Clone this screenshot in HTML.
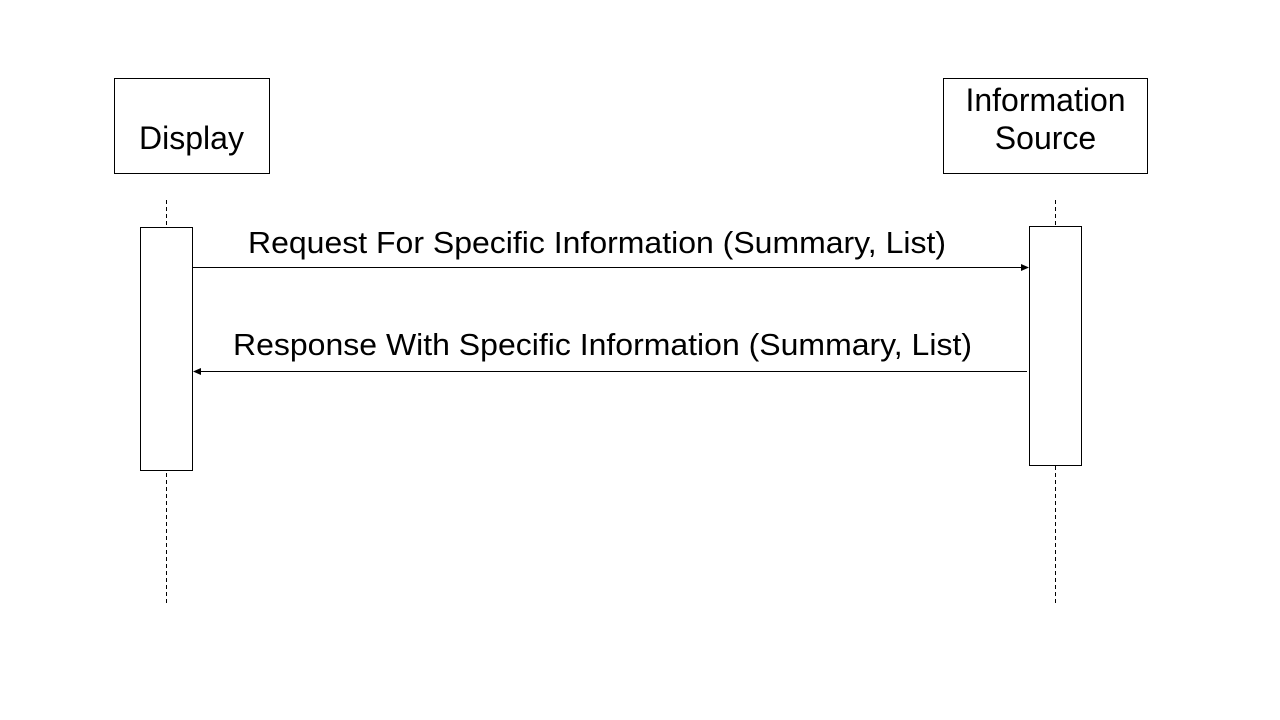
<!DOCTYPE html>
<html><head><meta charset="utf-8"><style>
html,body{margin:0;padding:0;background:#fff;}
svg{display:block;}
text{font-family:"Liberation Sans",Arial,sans-serif;fill:#000;}
</style></head><body>
<svg width="1280" height="720" viewBox="0 0 1280 720" xmlns="http://www.w3.org/2000/svg">
<rect x="114.5" y="78.5" width="155" height="95" fill="#fff" stroke="#000" stroke-width="1"/>
<text x="191.5" y="149" font-size="32" text-anchor="middle">Display</text>
<rect x="943.5" y="78.5" width="204" height="95" fill="#fff" stroke="#000" stroke-width="1"/>
<text x="1045.5" y="111" font-size="32" text-anchor="middle">Information</text>
<text x="1045.5" y="149" font-size="32" text-anchor="middle">Source</text>
<line x1="166.5" y1="200" x2="166.5" y2="604" stroke="#000" stroke-width="1" stroke-dasharray="4,3"/>
<line x1="1055.5" y1="200" x2="1055.5" y2="604" stroke="#000" stroke-width="1" stroke-dasharray="4,3"/>
<rect x="140.5" y="227.5" width="52" height="243" fill="#fff" stroke="#000" stroke-width="1"/>
<rect x="1029.5" y="226.5" width="52" height="239" fill="#fff" stroke="#000" stroke-width="1"/>
<line x1="193" y1="267.5" x2="1022" y2="267.5" stroke="#000" stroke-width="1"/>
<polygon points="1029,267.5 1021,264 1021,271" fill="#000"/>
<text x="248" y="253" font-size="31" textLength="698" lengthAdjust="spacingAndGlyphs">Request For Specific Information (Summary, List)</text>
<line x1="200" y1="371.5" x2="1027" y2="371.5" stroke="#000" stroke-width="1"/>
<polygon points="193,371.5 201,368 201,375" fill="#000"/>
<text x="233" y="355" font-size="31" textLength="739" lengthAdjust="spacingAndGlyphs">Response With Specific Information (Summary, List)</text>
</svg>
</body></html>
